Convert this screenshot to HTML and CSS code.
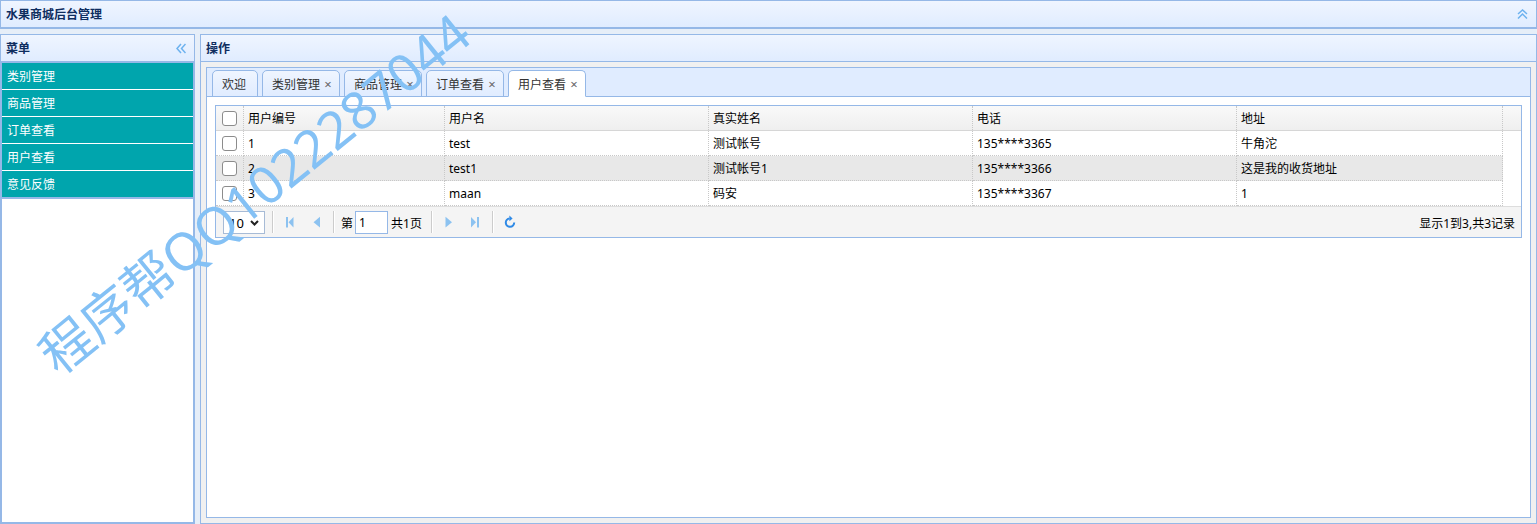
FILE: index.html
```html
<!DOCTYPE html>
<html lang="zh-CN">
<head>
<meta charset="utf-8">
<title>水果商城后台管理</title>
<link rel="stylesheet" href="styles.css">
</head>
<body>
<div class="layout">
  <header class="north">
    <span class="panel-title">水果商城后台管理</span>
    <svg class="tool-icon" width="11" height="10" viewBox="0 0 11 10"><polyline points="1,5 5.5,1 10,5" /><polyline points="1,9.5 5.5,5 10,9.5" /></svg>
  </header>
  <div class="main">
    <aside class="west">
      <div class="panel-header">
        <span class="panel-title">菜单</span>
        <svg class="tool-icon" width="10" height="11" viewBox="0 0 10 11"><polyline points="5,1 1,5.5 5,10" /><polyline points="9.5,1 5.5,5.5 9.5,10" /></svg>
      </div>
      <div class="west-body">
        <ul class="menu">
          <li>类别管理</li>
          <li>商品管理</li>
          <li>订单查看</li>
          <li>用户查看</li>
          <li>意见反馈</li>
        </ul>
      </div>
    </aside>
    <section class="center">
      <div class="panel-header">
        <span class="panel-title">操作</span>
      </div>
      <div class="center-body">
        <div class="tabs">
          <div class="tabs-header">
            <div class="tab">欢迎</div>
            <div class="tab closable">类别管理<span class="tab-close">×</span></div>
            <div class="tab closable">商品管理<span class="tab-close">×</span></div>
            <div class="tab closable">订单查看<span class="tab-close">×</span></div>
            <div class="tab closable selected">用户查看<span class="tab-close">×</span></div>
          </div>
          <div class="tabs-panel">
            <div class="datagrid">
              <div class="dg-row dg-head">
                <div class="cell cb-cell"><span class="cb"></span></div>
                <div class="cell">用户编号</div>
                <div class="cell">用户名</div>
                <div class="cell">真实姓名</div>
                <div class="cell">电话</div>
                <div class="cell">地址</div>
                <div class="filler"></div>
              </div>
              <div class="dg-row">
                <div class="cell cb-cell"><span class="cb"></span></div>
                <div class="cell">1</div>
                <div class="cell">test</div>
                <div class="cell">测试帐号</div>
                <div class="cell">135****3365</div>
                <div class="cell">牛角沱</div>
                <div class="filler"></div>
              </div>
              <div class="dg-row alt">
                <div class="cell cb-cell"><span class="cb"></span></div>
                <div class="cell">2</div>
                <div class="cell">test1</div>
                <div class="cell">测试帐号1</div>
                <div class="cell">135****3366</div>
                <div class="cell">这是我的收货地址</div>
                <div class="filler"></div>
              </div>
              <div class="dg-row">
                <div class="cell cb-cell"><span class="cb"></span></div>
                <div class="cell">3</div>
                <div class="cell">maan</div>
                <div class="cell">码安</div>
                <div class="cell">135****3367</div>
                <div class="cell">1</div>
                <div class="filler"></div>
              </div>
              <div class="pager">
                <div class="pg-select"><span>10</span><svg width="9" height="6" viewBox="0 0 9 6"><polyline points="1,1 4.5,4.5 8,1" /></svg></div>
                <span class="pg-sep"></span>
                <span class="pg-btn"><svg width="16" height="16" viewBox="0 0 16 16"><rect x="4" y="3" width="2" height="10.5" /><polygon points="11.5,3 6.5,8.2 11.5,13.5" /></svg></span>
                <span class="pg-btn"><svg width="16" height="16" viewBox="0 0 16 16"><polygon points="11,2.8 4.5,8.2 11,13.6" /></svg></span>
                <span class="pg-sep"></span>
                <span class="pg-text first">第</span>
                <span class="pg-input">1</span>
                <span class="pg-text last">共1页</span>
                <span class="pg-sep"></span>
                <span class="pg-btn"><svg width="16" height="16" viewBox="0 0 16 16"><polygon points="4.5,2.8 11,8.2 4.5,13.6" /></svg></span>
                <span class="pg-btn"><svg width="16" height="16" viewBox="0 0 16 16"><polygon points="3,3 8,8.2 3,13.5" /><rect x="9" y="3" width="2" height="10.5" /></svg></span>
                <span class="pg-sep"></span>
                <span class="pg-btn"><svg class="refresh" width="16" height="16" viewBox="0 0 16 16"><path d="M12.2 8.6 A4.2 4.2 0 1 1 7.6 4.4" /><polygon points="7.4,1.6 10.6,4.4 7.4,7.2" /></svg></span>
                <span class="pg-info">显示1到3,共3记录</span>
              </div>
            </div>
          </div>
        </div>
      </div>
    </section>
  </div>
</div>
<div class="watermark">程序帮QQ1022287044</div>
</body>
</html>
```

FILE: styles.css
```css
* { box-sizing: border-box; }
html, body { margin: 0; padding: 0; }
body {
  width: 1537px;
  height: 524px;
  overflow: hidden;
  position: relative;
  background: #e6eef8;
  font-family: "Noto Sans", "Noto Sans CJK SC", sans-serif;
  font-size: 12px;
  color: #000;
}
.layout { display: flex; flex-direction: column; gap: 5px; height: 524px; }

.north {
  height: 29px;
  flex: none;
  border: 1px solid #95b8e7;
  border-bottom-width: 2px;
  background: linear-gradient(#eff5ff, #e0ecff);
  display: flex;
  align-items: center;
  justify-content: space-between;
  padding: 2px 8px 0 5px;
}
.panel-title { font-weight: bold; color: #0e2d5f; line-height: 16px; }
.tool-icon { display: block; fill: none; stroke: #6db2ef; stroke-width: 1.5; margin-top: -2px; }

.main { flex: 1; display: flex; gap: 5px; min-height: 0; }

.panel-header {
  height: 27px;
  flex: none;
  border-bottom: 1px solid #95b8e7;
  background: linear-gradient(#eff5ff, #e0ecff);
  display: flex;
  align-items: center;
  justify-content: space-between;
  padding: 2px 8px 0 5px;
}

.west {
  width: 195px;
  flex: none;
  border: 1px solid #95b8e7;
  display: flex;
  flex-direction: column;
  background: #fff;
}
.west-body { flex: 1; border: 1px solid #95b8e7; background: #fff; }
.menu { list-style: none; margin: 0; padding: 0; border-bottom: 2px solid #95b8e7; }
.menu li {
  height: 27px;
  line-height: 26px;
  padding-top: 1px;
  border-bottom: 1px solid #fff;
  background: #00a5ad;
  color: #fff;
  padding-left: 5px;
  overflow: visible;
}
.menu li:last-child { height: 26px; border-bottom: 0; }

.center {
  flex: 1;
  border: 1px solid #95b8e7;
  display: flex;
  flex-direction: column;
  min-width: 0;
}
.center-body { flex: 1; background: #f0f0f0; padding: 5px; display: flex; min-height: 0; }
.tabs { flex: 1; border: 1px solid #95b8e7; display: flex; flex-direction: column; background: #fff; min-width: 0; }
.tabs-header {
  height: 29px;
  flex: none;
  border-bottom: 1px solid #95b8e7;
  background: #e0ecff;
  display: flex;
  align-items: flex-end;
  gap: 4px;
  padding-left: 5px;
}
.tab {
  position: relative;
  height: 27px;
  line-height: 25px;
  padding: 1px 11px 0 9px;
  margin-bottom: -1px;
  border: 1px solid #95b8e7;
  border-radius: 5px 5px 0 0;
  background: linear-gradient(#eff5ff, #e0ecff);
  color: #333;
}
.tab.closable { padding-right: 19px; }
.tab.selected { background: #fff; border-bottom-color: #fff; }
.tab-close {
  position: absolute;
  right: 5px;
  top: 1px;
  width: 12px;
  text-align: center;
  color: #666;
  font-size: 13px;
}

.tabs-panel { flex: 1; padding: 8px; background: #fff; }

.datagrid { border: 1px solid #95b8e7; background: #fff; }
.dg-row {
  display: grid;
  grid-template-columns: 28px 201px 264px 264px 264px 266px 1fr;
  height: 25px;
}
.cell {
  display: flex;
  align-items: center;
  padding: 2px 0 0 4px;
  white-space: nowrap;
  border-right: 1px dotted #c8c8c8;
  border-bottom: 1px dotted #c8c8c8;
  line-height: 16px;
}
.cb-cell { justify-content: center; padding: 0; }
.cb {
  display: block;
  width: 15px;
  height: 15px;
  border: 1px solid #8c8c8c;
  border-radius: 3px;
  background: #fff;
}
.dg-head { background: linear-gradient(#f9f9f9, #efefef); border-bottom: 1px solid #d6d6d6; }
.dg-head .cell { border-bottom: 0; }
.dg-row.alt .cell { background: #e8e8e8; }

.pager {
  height: 31px;
  border-top: 1px solid #dddddd;
  background: #f4f4f4;
  display: flex;
  align-items: center;
  padding-left: 7px;
  padding-right: 6px;
}
.pg-select {
  width: 42px;
  height: 23px;
  border: 1px solid #a7bbd6;
  background: #fff;
  display: flex;
  align-items: center;
  justify-content: space-between;
  padding: 1px 5px 0 5px;
  font-size: 13px;
  margin-right: 7px;
}
.pg-select svg { display: block; fill: none; stroke: #222; stroke-width: 2; }
.pg-sep {
  width: 2px;
  height: 22px;
  border-left: 1px solid #cccccc;
  border-right: 1px solid #ffffff;
  margin-right: 3px;
}
.pg-btn { width: 26px; height: 24px; display: flex; align-items: center; justify-content: center; margin-right: 1px; }
.pg-btn + .pg-sep { margin-left: 2px; }
.pg-btn svg { display: block; fill: #8cc2f0; }
.pg-btn svg.refresh { fill: #2f8ae6; }
.pg-btn svg.refresh path { fill: none; stroke: #2f8ae6; stroke-width: 2; }
.pg-text { padding-top: 2px; }
.pg-text.first { margin-left: 3px; margin-right: 2px; }
.pg-text.last { margin-left: 3px; margin-right: 9px; }
.pg-input {
  width: 33px;
  height: 23px;
  border: 1px solid #95b8e7;
  background: #fff;
  padding: 1px 0 0 3px;
  line-height: 20px;
}
.pg-info { margin-left: auto; padding-top: 2px; }

.watermark {
  position: absolute;
  left: 254px;
  top: 193px;
  transform: translate(-50%, -50%) rotate(-39deg);
  white-space: nowrap;
  font-size: 52px;
  line-height: 1;
  color: #84c1f5;
  pointer-events: none;
}
```
